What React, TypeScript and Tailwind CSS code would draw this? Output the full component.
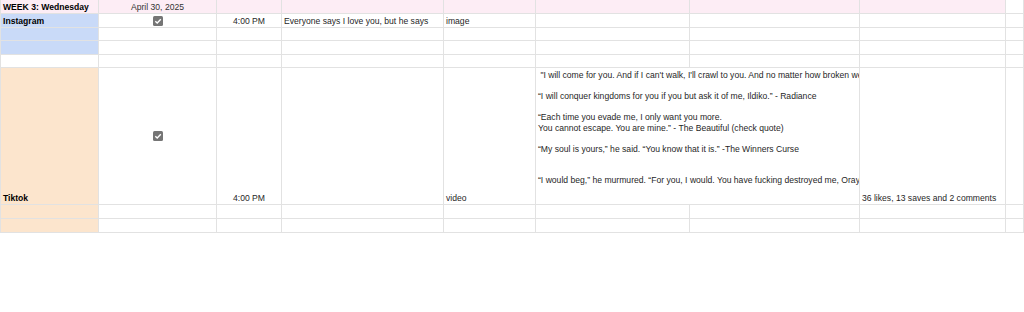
import React from "react";

const line = "border-[#e2e2e2]";

function Check() {
  return (
    <svg width="10" height="10" viewBox="0 0 10 10">
      <rect x="0" y="0" width="10" height="10" rx="1.5" fill="#757575" />
      <path d="M2.3 5.2 L4.2 7 L7.8 3.2" fill="none" stroke="#fff" strokeWidth="1.4" />
    </svg>
  );
}

function Cell({
  className = "",
  children,
}: {
  className?: string;
  children?: React.ReactNode;
}) {
  return (
    <div
      className={`flex min-w-0 items-end overflow-hidden whitespace-nowrap border-r border-b ${line} px-[2px] pb-[1.5px] leading-[10px] ${className}`}
    >
      {children}
    </div>
  );
}

function CheckCell() {
  return (
    <div className={`flex items-center justify-center border-r border-b ${line}`}>
      <Check />
    </div>
  );
}

const quotes = [
  ' "I will come for you. And if I can\'t walk, I\'ll crawl to you. And no matter how broken we are, I\'ll find you."',
  "",
  "\u201CI will conquer kingdoms for you if you but ask it of me, Ildiko.\u201D - Radiance",
  "",
  "\u201CEach time you evade me, I only want you more.",
  "You cannot escape. You are mine.\u201D - The Beautiful (check quote)",
  "",
  "\u201CMy soul is yours,\u201D he said. \u201CYou know that it is.\u201D -The Winners Curse",
  "",
  "",
  "\u201CI would beg,\u201D he murmured. \u201CFor you, I would. You have fucking destroyed me, Oraya.\u201D",
];

export default function App() {
  const empty = (n: number, extra = "") =>
    Array.from({ length: n }).map((_, i) => <Cell key={i} className={extra} />);

  return (
    <div className="h-[312px] w-[1024px] overflow-hidden bg-white font-['Liberation_Sans',Arial,sans-serif] text-[8.6px] text-[#1f1f1f]">
      <div
        className={`grid border-l ${line} grid-cols-[98px_118px_65px_162px_92px_154px_170px_146px_1fr] grid-rows-[14px_14px_13px_14px_13px_137px_14px_14px]`}
      >
        {/* Header */}
        <Cell className="bg-[#fdedf5] font-bold text-black">WEEK 3: Wednesday</Cell>
        <Cell className="justify-center bg-[#fdedf5] text-[#333]">April 30, 2025</Cell>
        {empty(6, "bg-[#fdedf5]")}
        <Cell />

        {/* Instagram */}
        <Cell className="bg-[#c9daf8] font-bold text-black">Instagram</Cell>
        <CheckCell />
        <Cell className="justify-center">4:00 PM</Cell>
        <Cell>Everyone says I love you, but he says</Cell>
        <Cell>image</Cell>
        {empty(4)}

        <Cell className="bg-[#c9daf8]" />
        {empty(8)}
        <Cell className="bg-[#c9daf8]" />
        {empty(8)}
        {empty(9)}

        {/* Tiktok */}
        <Cell className="bg-[#fce5cd] font-bold text-black">Tiktok</Cell>
        <CheckCell />
        <Cell className="justify-center">4:00 PM</Cell>
        <Cell />
        <Cell>video</Cell>
        <div
          className={`col-span-2 overflow-hidden whitespace-pre border-r border-b ${line} px-[2px] pt-[2px] leading-[10.5px]`}
        >
          {quotes.map((q, i) => (
            <div key={i} className="h-[10.5px]">
              {q}
            </div>
          ))}
        </div>
        <Cell>36 likes, 13 saves and 2 comments</Cell>
        <Cell />

        <Cell className="bg-[#fce5cd]" />
        {empty(8)}
        <Cell className="bg-[#fce5cd]" />
        {empty(8)}
      </div>
    </div>
  );
}
